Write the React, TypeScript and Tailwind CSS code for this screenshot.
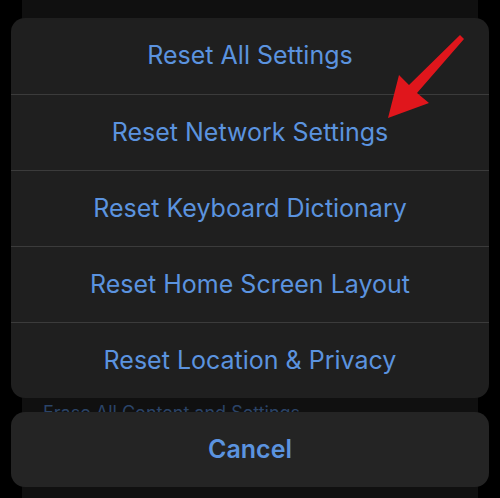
import * as React from "react";

const options = [
  "Reset All Settings",
  "Reset Network Settings",
  "Reset Keyboard Dictionary",
  "Reset Home Screen Layout",
  "Reset Location & Privacy",
];

export default function App() {
  return (
    <div
      className="relative w-[500px] h-[498px] overflow-hidden bg-black"
      style={{ fontFamily: "Inter, 'Noto Sans', sans-serif" }}
    >
      {/* settings list dimmed behind the sheet */}
      <div className="absolute inset-y-0 left-[22px] right-[22px] bg-[#101010]">
        <div className="absolute left-[21px] top-[399px] text-[18px] text-[#2b4468] whitespace-nowrap">
          Erase All Content and Settings
        </div>
      </div>

      <div className="relative flex flex-col gap-[14px] px-[11px] pt-[18px]">
        <div className="flex flex-col rounded-[14px] bg-[#1f1f1f] overflow-hidden">
          {options.map((label, i) => (
            <div
              key={label}
              className={
                "flex h-[76px] items-center justify-center text-[25px] text-[#5b93df] " +
                (i > 0 ? "border-t border-[#3b3b3b]" : "")
              }
            >
              {label}
            </div>
          ))}
        </div>
        <div className="flex h-[75px] items-center justify-center rounded-[14px] bg-[#242424] text-[25px] font-semibold text-[#5b93df]">
          Cancel
        </div>
      </div>

      <svg className="pointer-events-none absolute inset-0" width="500" height="498">
        <polygon
          points="388,118 399,75 409,85 460,35 464,39 417,93 429,103"
          fill="#e0161c"
        />
      </svg>
    </div>
  );
}
